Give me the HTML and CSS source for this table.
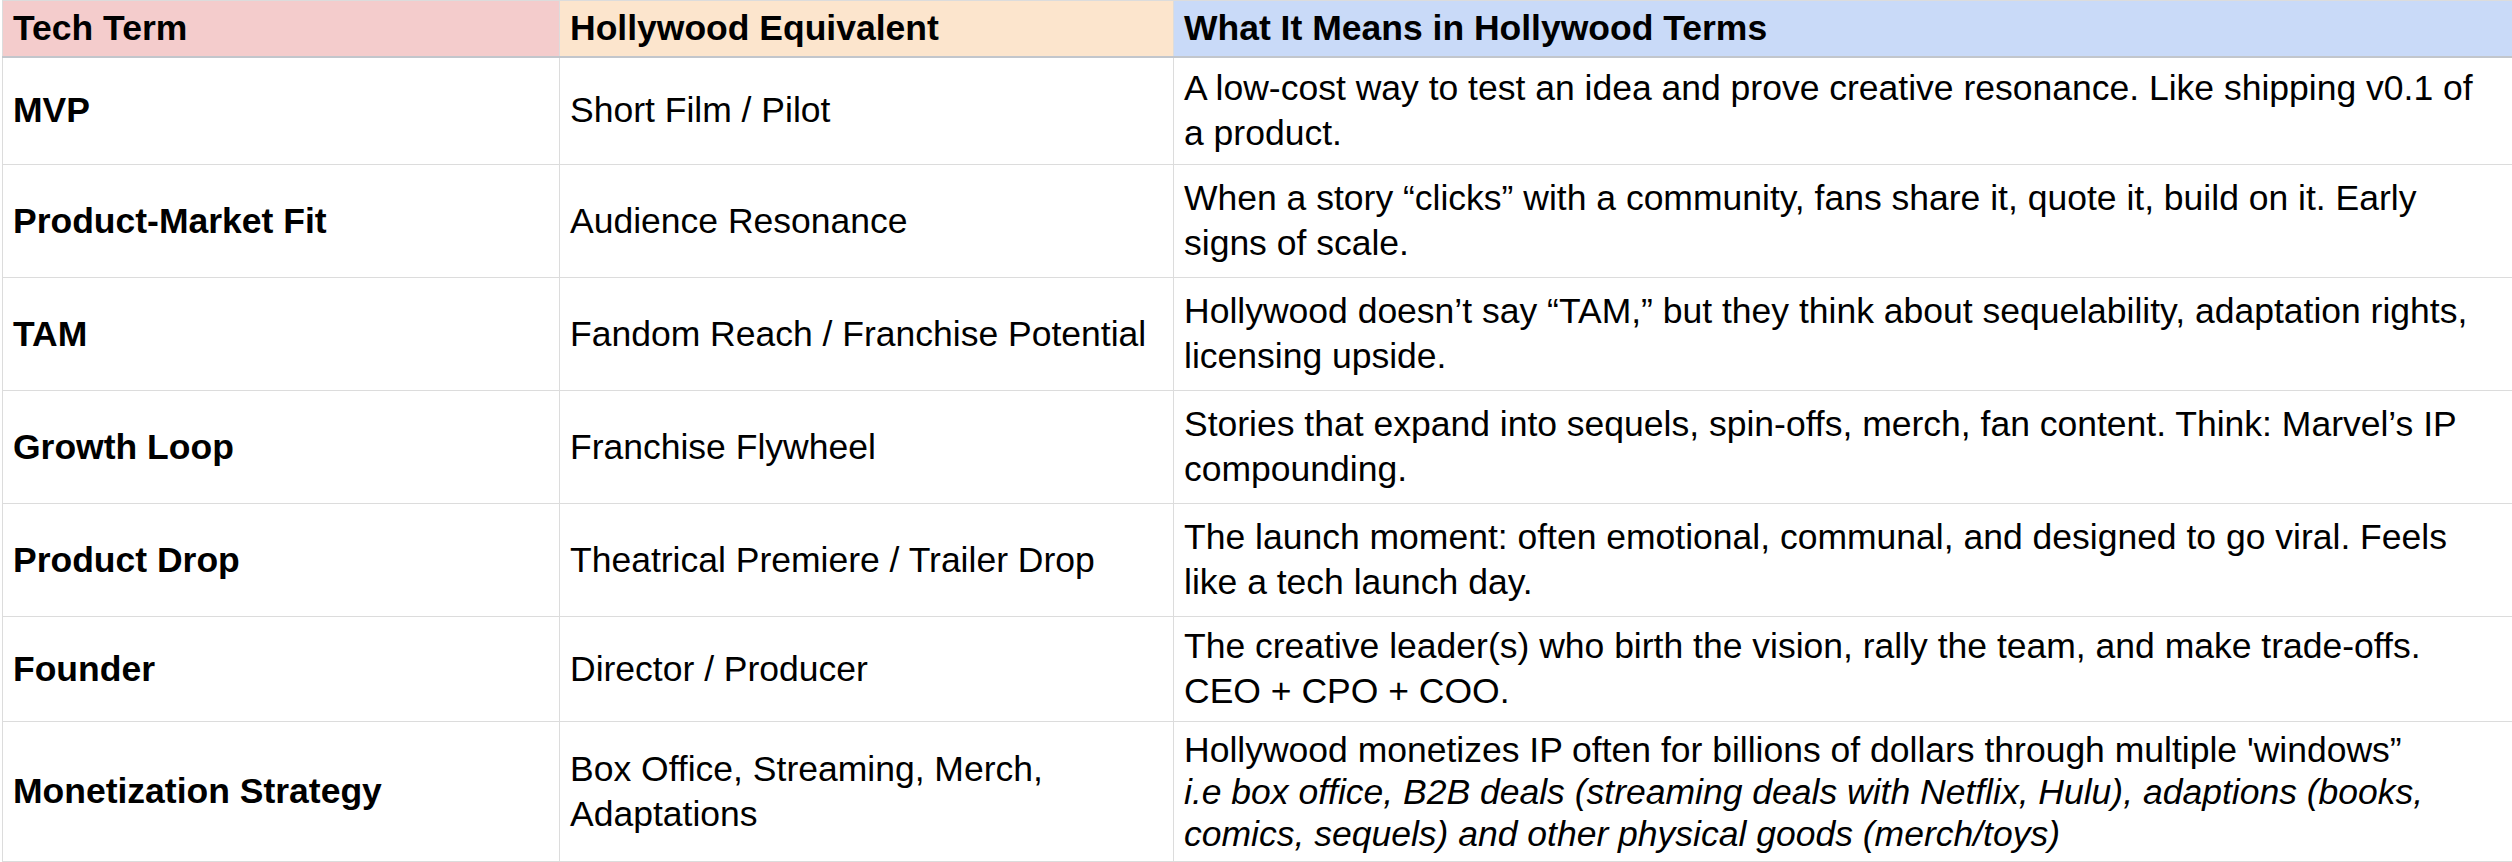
FILE: index.html
```html
<!DOCTYPE html>
<html lang="en">
<head>
<meta charset="utf-8">
<title>Tech Terms vs Hollywood</title>
<link rel="stylesheet" href="styles.css">
</head>
<body>
<table class="grid">
  <colgroup>
    <col class="c1"><col class="c2"><col class="c3">
  </colgroup>
  <thead>
    <tr class="head">
      <th class="h-term">Tech Term</th>
      <th class="h-equiv">Hollywood Equivalent</th>
      <th class="h-mean">What It Means in Hollywood Terms</th>
    </tr>
  </thead>
  <tbody>
    <tr class="r1">
      <td class="term">MVP</td>
      <td>Short Film / Pilot</td>
      <td>A low-cost way to test an idea and prove creative resonance. Like shipping v0.1 of a product.</td>
    </tr>
    <tr class="r2">
      <td class="term">Product-Market Fit</td>
      <td>Audience Resonance</td>
      <td>When a story “clicks” with a community, fans share it, quote it, build on it. Early signs of scale.</td>
    </tr>
    <tr class="r2">
      <td class="term">TAM</td>
      <td>Fandom Reach / Franchise Potential</td>
      <td>Hollywood doesn’t say “TAM,” but they think about sequelability, adaptation rights, licensing upside.</td>
    </tr>
    <tr class="r2">
      <td class="term">Growth Loop</td>
      <td>Franchise Flywheel</td>
      <td>Stories that expand into sequels, spin-offs, merch, fan content. Think: Marvel’s IP compounding.</td>
    </tr>
    <tr class="r2">
      <td class="term">Product Drop</td>
      <td>Theatrical Premiere / Trailer Drop</td>
      <td>The launch moment: often emotional, communal, and designed to go viral. Feels like a tech launch day.</td>
    </tr>
    <tr class="r6">
      <td class="term">Founder</td>
      <td>Director / Producer</td>
      <td>The creative leader(s) who birth the vision, rally the team, and make trade-offs. CEO + CPO + COO.</td>
    </tr>
    <tr class="r7">
      <td class="term">Monetization Strategy</td>
      <td>Box Office, Streaming, Merch, Adaptations</td>
      <td class="tight">Hollywood monetizes IP often for billions of dollars through multiple 'windows”<br><em>i.e box office, B2B deals (streaming deals with Netflix, Hulu), adaptions (books, comics, sequels) and other physical goods (merch/toys)</em></td>
    </tr>
  </tbody>
</table>
</body>
</html>
```

FILE: styles.css
```css
html, body {
  margin: 0;
  padding: 0;
  background: #ffffff;
}

body {
  padding: 0 0 0 2px;
  font-family: "Liberation Sans", Arial, sans-serif;
  color: #000000;
}

.grid {
  border-collapse: collapse;
  table-layout: fixed;
  width: 2510px;
  font-size: 35.5px;
  line-height: 45px;
  border: 1px solid #c6c6c6;
}

.c1 { width: 557px; }
.c2 { width: 614px; }
.c3 { width: 1339px; }

.grid th,
.grid td {
  border: 1px solid #dcdcdc;
  padding: 4px 10px 4px 10px;
  vertical-align: middle;
  text-align: left;
  overflow: hidden;
}

.grid th {
  font-weight: 700;
  font-size: 35.5px;
  line-height: 40px;
  padding-top: 7px;
  padding-bottom: 7px;
  border-bottom: 2px solid #c2c6cc;
}

.head { height: 56px; }
.h-term { background: #f4cccc; }
.h-equiv { background: #fce5cd; }
.h-mean { background: #c9daf8; }

.term {
  font-weight: 700;
}

.r1 { height: 108px; }
.r2 { height: 113px; }
.r6 { height: 105px; }
.r7 { height: 140px; }

.tight {
  line-height: 42px;
  padding-top: 6px;
  padding-bottom: 2px;
}

.tight em {
  font-style: italic;
}
```
